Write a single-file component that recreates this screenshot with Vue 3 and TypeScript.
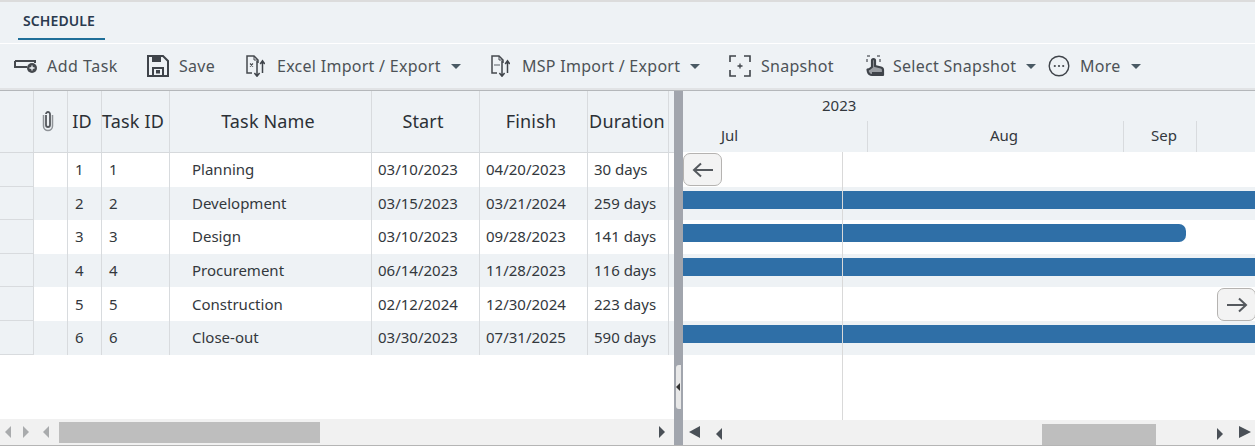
<script setup lang="ts">
interface TaskRow {
  id: number
  name: string
  start: string
  finish: string
  duration: string
  barWidth: string
  rounded: boolean
}

const tasks: TaskRow[] = [
  { id: 1, name: 'Planning', start: '03/10/2023', finish: '04/20/2023', duration: '30 days', barWidth: '0', rounded: false },
  { id: 2, name: 'Development', start: '03/15/2023', finish: '03/21/2024', duration: '259 days', barWidth: '100%', rounded: false },
  { id: 3, name: 'Design', start: '03/10/2023', finish: '09/28/2023', duration: '141 days', barWidth: '503px', rounded: true },
  { id: 4, name: 'Procurement', start: '06/14/2023', finish: '11/28/2023', duration: '116 days', barWidth: '100%', rounded: false },
  { id: 5, name: 'Construction', start: '02/12/2024', finish: '12/30/2024', duration: '223 days', barWidth: '0', rounded: false },
  { id: 6, name: 'Close-out', start: '03/30/2023', finish: '07/31/2025', duration: '590 days', barWidth: '100%', rounded: false },
]
</script>

<template>
  <div class="page">
    <div class="tabs">
      <div class="tab">SCHEDULE</div>
    </div>

    <div class="toolbar">
      <button class="tool tool-add">
        <svg width="24" height="16" viewBox="0 0 24 16">
          <path d="M1 3h21M1 3v6h12M21 3v2" fill="none" stroke="#45494e" stroke-width="2" />
          <circle cx="18" cy="10" r="5" fill="#45494e" />
          <path d="M15.500 10h5M18 7.500v5" stroke="#eef2f5" stroke-width="1.300" />
        </svg>
        <span>Add Task</span>
      </button>
      <button class="tool tool-save">
        <svg width="22" height="22" viewBox="0 0 22 22">
          <path d="M1 1h15l5 5v15H1z" fill="none" stroke="#3f444a" stroke-width="2" />
          <path d="M5 1h9v6H5z" fill="#3f444a" />
          <path d="M6 21v-8h10v8" fill="none" stroke="#3f444a" stroke-width="2" />
          <rect x="9" y="15" width="4" height="3.500" fill="#3f444a" />
        </svg>
        <span>Save</span>
      </button>
      <button class="tool tool-excel">
        <svg width="20" height="22" viewBox="0 0 20 22">
          <path d="M7 18H2V1h7l4 4v3" fill="none" stroke="#45494e" stroke-width="1.500" />
          <path d="M9 1v4h4" fill="none" stroke="#45494e" stroke-width="1" />
          <path d="M5 8.500l3 3M8 8.500l-3 3" stroke="#45494e" stroke-width="1.100" />
          <path d="M12 6v15M9.400 18l2.600 3.200 2.600-3.200" fill="none" stroke="#3f444a" stroke-width="1.500" />
          <path d="M17.500 18V6M15.200 9l2.300-3.200L19.800 9" fill="none" stroke="#3f444a" stroke-width="1.500" />
        </svg>
        <span>Excel Import / Export</span>
        <i class="caret"></i>
      </button>
      <button class="tool tool-msp">
        <svg width="20" height="22" viewBox="0 0 20 22">
          <path d="M7 18H2V1h7l4 4v3" fill="none" stroke="#45494e" stroke-width="1.500" />
          <path d="M9 1v4h4" fill="none" stroke="#45494e" stroke-width="1" />
          <path d="M4 10h6" stroke="#8a8f95" stroke-width="1.500" />
          <path d="M12 6v15M9.400 18l2.600 3.200 2.600-3.200" fill="none" stroke="#3f444a" stroke-width="1.500" />
          <path d="M17.500 18V6M15.200 9l2.300-3.200L19.800 9" fill="none" stroke="#3f444a" stroke-width="1.500" />
        </svg>
        <span>MSP Import / Export</span>
        <i class="caret"></i>
      </button>
      <button class="tool tool-snap">
        <svg width="22" height="22" viewBox="0 0 22 22">
          <path d="M1 7V1h6M15 1h6v6M21 15v6h-6M7 21H1v-6" fill="none" stroke="#3f444a" stroke-width="1.600" />
          <path d="M8.500 11h5M11 8.500v5" stroke="#3f444a" stroke-width="1.300" />
        </svg>
        <span>Snapshot</span>
      </button>
      <button class="tool tool-select">
        <svg width="20" height="22" viewBox="0 0 20 22">
          <path d="M1 1h3M11 1h3M1 4v3M14 4v3" fill="none" stroke="#8a8e93" stroke-width="2" />
          <path d="M6 12V5.500a1.500 1.500 0 0 1 3 0V11l6 1.500q2 .5 2 2.500v5H6q-3 0-4-3l-.5-2.500 2-.5z" fill="#9a9ea3" stroke="#3f444a" stroke-width="2.200" stroke-linejoin="round" />
          <path d="M1.500 19l3 2M6 17h11v3H6z" fill="#3f444a" />
        </svg>
        <span>Select Snapshot</span>
        <i class="caret"></i>
      </button>
      <button class="tool tool-more">
        <svg width="22" height="22" viewBox="0 0 22 22">
          <circle cx="11" cy="11" r="9.800" fill="none" stroke="#3f444a" stroke-width="1.400" />
          <circle cx="6.800" cy="11" r="1.100" fill="#3f444a" />
          <circle cx="11" cy="11" r="1.100" fill="#3f444a" />
          <circle cx="15.200" cy="11" r="1.100" fill="#3f444a" />
        </svg>
        <span>More</span>
        <i class="caret"></i>
      </button>
    </div>

    <div class="panes">
      <section class="left-pane">
        <div class="grid-row grid-head">
          <div class="cell"></div>
          <div class="cell center">
            <svg width="12" height="22" viewBox="0 0 12 22">
              <path d="M4 5v10a2 2 0 0 0 4 0V4a2 2 0 0 0-4 0" fill="none" stroke="#55595e" stroke-width="1.800" />
              <path d="M1.500 5v11a4.500 4.500 0 0 0 9 0V5" fill="none" stroke="#8f9398" stroke-width="1.500" />
            </svg>
          </div>
          <div class="cell center">ID</div>
          <div class="cell center">Task ID</div>
          <div class="cell center">Task Name</div>
          <div class="cell center">Start</div>
          <div class="cell center">Finish</div>
          <div class="cell center last-head">Duration</div>
        </div>

        <div class="grid-body">
          <div v-for="(t, i) in tasks" :key="t.id" class="grid-row" :class="{ alt: i % 2 === 1 }">
            <div class="cell head-cell"></div>
            <div class="cell"></div>
            <div class="cell ind">{{ t.id }}</div>
            <div class="cell ind">{{ t.id }}</div>
            <div class="cell name">{{ t.name }}</div>
            <div class="cell">{{ t.start }}</div>
            <div class="cell">{{ t.finish }}</div>
            <div class="cell">{{ t.duration }}</div>
          </div>
        </div>

        <div class="scrollbar left-scroll">
          <i class="tri-left pale"></i>
          <i class="tri-right pale"></i>
          <i class="tri-left pale"></i>
          <div class="thumb left-thumb"></div>
          <i class="tri-right end"></i>
        </div>
      </section>

      <div class="splitter">
        <div class="collapse"><i class="tri-left small"></i></div>
      </div>

      <section class="right-pane">
        <div class="timeline-head">
          <div class="year">2023</div>
          <div class="months">
            <div class="month jul">Jul</div>
            <div class="month aug">Aug</div>
            <div class="month sep">Sep</div>
            <div class="month rest"></div>
          </div>
        </div>

        <div class="chart">
          <div v-for="(t, i) in tasks" :key="t.id" class="chart-row" :class="{ alt: i % 2 === 1 }">
            <div
              v-if="t.barWidth !== '0'"
              class="bar"
              :class="{ rounded: t.rounded }"
              :style="{ width: t.barWidth }"
            ></div>
          </div>
          <div class="today"></div>
          <button class="nav-btn prev">
            <svg width="22" height="16" viewBox="0 0 22 16">
              <path d="M21 8H2M9 1.500L2 8l7 6.500" fill="none" stroke="#55595e" stroke-width="2" />
            </svg>
          </button>
          <button class="nav-btn next">
            <svg width="22" height="16" viewBox="0 0 22 16">
              <path d="M1 8h19M13 1.500L20 8l-7 6.500" fill="none" stroke="#55595e" stroke-width="2" />
            </svg>
          </button>
        </div>

        <div class="scrollbar gantt-scroll">
          <i class="tri-left big"></i>
          <i class="tri-left second"></i>
          <div class="thumb right-thumb"></div>
          <i class="tri-right second-end"></i>
          <i class="tri-right big"></i>
        </div>
      </section>
    </div>
  </div>
</template>

<style scoped>
.page {
  width: 1255px;
  height: 446px;
  overflow: hidden;
  background: #fff;
  border-top: 2px solid #dcdcdc;
  box-sizing: border-box;
  font-family: "Noto Sans", "Open Sans", sans-serif;
  color: #33383d;
  display: flex;
  flex-direction: column;
}

.tabs {
  height: 41px;
  background: #eef2f5;
  padding-left: 18px;
  border-bottom: 1px solid #fff;
  flex: none;
}
.tab {
  width: 87px;
  height: 38px;
  box-sizing: border-box;
  padding: 9px 0 0 5px;
  border-bottom: 2px solid #1f6f99;
  font-size: 14px;
  font-weight: 600;
  line-height: 20px;
  letter-spacing: 0.1px;
  color: #2a3a4f;
}

.toolbar {
  height: 44px;
  flex: none;
  background: #eef2f5;
  border-bottom: 2px solid #e1e3e5;
  display: flex;
  align-items: center;
  padding-left: 14px;
}
.tool {
  display: flex;
  align-items: center;
  padding: 0;
  border: 0;
  background: none;
  font: inherit;
  font-size: 16px;
  letter-spacing: 0.28px;
  color: #4d5257;
}
.tool svg {
  flex: none;
}
.tool-add {
  width: 133px;
  letter-spacing: 0.5px;
}
.tool-add svg {
  margin-right: 9px;
}
.tool-save {
  width: 98px;
}
.tool-save svg {
  margin-right: 10px;
}
.tool-excel {
  width: 245px;
}
.tool-excel svg,
.tool-msp svg {
  margin-right: 12px;
}
.tool-msp {
  width: 239px;
}
.tool-snap {
  width: 137px;
}
.tool-snap svg {
  margin-right: 10px;
}
.tool-select {
  width: 182px;
}
.tool-select svg {
  margin-right: 7px;
}
.tool-more svg {
  margin-right: 10px;
}
.caret {
  width: 0;
  height: 0;
  border-left: 5px solid transparent;
  border-right: 5px solid transparent;
  border-top: 5px solid #4a5a64;
  margin-left: 10px;
  margin-top: 1px;
}

.panes {
  flex: 1;
  display: flex;
  min-height: 0;
  border-top: 1px solid #b4b7ba;
  border-bottom: 1px solid #b5b5b5;
}
.left-pane {
  width: 674px;
  flex: none;
  display: flex;
  flex-direction: column;
}

.grid-row {
  display: grid;
  grid-template-columns: 34px 34px 34px 68px 202px 108px 108px 81px;
  height: 33.6px;
  font-size: 15px;
}
.grid-row.alt {
  background: #eef2f5;
}
.grid-head {
  height: 62px;
  flex: none;
  background: #eef2f5;
  font-size: 18px;
  letter-spacing: 0.15px;
  color: #2b3035;
  border-bottom: 1px solid #d6d9dc;
  box-sizing: border-box;
}
.cell {
  display: flex;
  align-items: center;
  padding-left: 6px;
  padding-bottom: 1px;
  border-right: 1px solid #d8dbde;
  box-sizing: border-box;
  white-space: nowrap;
  min-width: 0;
}
.center {
  justify-content: center;
  padding: 0 5px 2px 0;
}
.last-head {
  padding-right: 2px;
}
.ind {
  padding-left: 7px;
}
.name {
  padding-left: 22px;
}
.head-cell {
  background: #eef2f5;
  border-bottom: 1px solid #d8dbde;
}

.grid-body {
  flex: 1;
}

.scrollbar {
  flex: none;
  background: #f1f1f1;
  display: flex;
  align-items: center;
  position: relative;
}
.left-scroll {
  height: 26px;
  padding-left: 5px;
}
.tri-left,
.tri-right {
  display: block;
  flex: none;
  width: 0;
  height: 0;
  border-top: 6px solid transparent;
  border-bottom: 6px solid transparent;
}
.tri-left {
  border-right: 6px solid #4a5057;
}
.tri-right {
  border-left: 6px solid #4a5057;
}
.pale.tri-left {
  border-right-color: #a9abad;
}
.pale.tri-right {
  border-left-color: #a9abad;
}
.left-scroll .tri-right.pale {
  margin-left: 12px;
}
.left-scroll .tri-left.pale:nth-child(3) {
  margin-left: 14px;
}
.thumb {
  height: 21px;
  background: #bebebe;
  flex: none;
}
.left-thumb {
  width: 261px;
  margin-left: 10px;
}
.end {
  margin-left: auto;
  margin-right: 9px;
}

.splitter {
  width: 9px;
  flex: none;
  background: #a1a5ad;
  position: relative;
}
.collapse {
  position: absolute;
  left: 2px;
  top: 274px;
  width: 5px;
  height: 44px;
  background: #e8e8e8;
  border-radius: 3px 0 0 3px;
  display: flex;
  align-items: center;
}
.tri-left.small {
  border-top-width: 4px;
  border-bottom-width: 4px;
  border-right-width: 4px;
  border-right-color: #333;
}

.right-pane {
  flex: 1;
  min-width: 0;
  display: flex;
  flex-direction: column;
}
.timeline-head {
  height: 61px;
  flex: none;
  background: #eef2f5;
  font-size: 15px;
  color: #33383d;
}
.year {
  height: 30px;
  line-height: 28px;
  padding-left: 139px;
}
.months {
  height: 31px;
  display: flex;
}
.month {
  box-sizing: border-box;
  border-right: 1px solid #d8dbde;
  text-align: center;
  line-height: 28px;
}
.jul {
  width: 185px;
  padding-left: 38px;
  text-align: left;
}
.aug {
  width: 256px;
  padding-left: 17px;
}
.sep {
  width: 73px;
  padding-left: 8px;
}
.rest {
  border: 0;
  flex: 1;
}

.chart {
  flex: 1;
  position: relative;
  padding-top: 1px;
}
.chart-row {
  height: 33.6px;
}
.chart-row.alt {
  background: #eef2f5;
}
.bar {
  height: 18px;
  background: #2f6fa7;
  position: relative;
  top: 4px;
}
.bar.rounded {
  border-radius: 0 7px 7px 0;
}
.today {
  position: absolute;
  left: 159px;
  top: 0;
  bottom: 0;
  width: 1px;
  background: #d9d9d9;
}
.nav-btn {
  position: absolute;
  width: 39px;
  height: 33px;
  padding: 0;
  display: flex;
  align-items: center;
  justify-content: center;
  background: #f3f3f3;
  border: 1px solid #b5b3b1;
  border-radius: 7px;
  box-sizing: border-box;
}
.prev {
  left: 0;
  top: 1px;
}
.next {
  right: -1px;
  top: 136px;
}

.gantt-scroll {
  height: 25px;
  padding: 0 4px 0 6px;
}
.tri-left.big,
.tri-right.big {
  border-top-width: 6px;
  border-bottom-width: 6px;
  margin-top: -1px;
}
.tri-left.big {
  border-right-width: 11px;
}
.tri-right.big {
  border-left-width: 12px;
  margin-left: 16px;
  margin-top: -2px;
}
.tri-left.second {
  margin-left: 16px;
  margin-top: 2px;
}
.second-end {
  margin-left: auto;
  margin-top: 2px;
}
.right-thumb {
  width: 114px;
  position: absolute;
  left: 359px;
  top: 4px;
}
</style>
